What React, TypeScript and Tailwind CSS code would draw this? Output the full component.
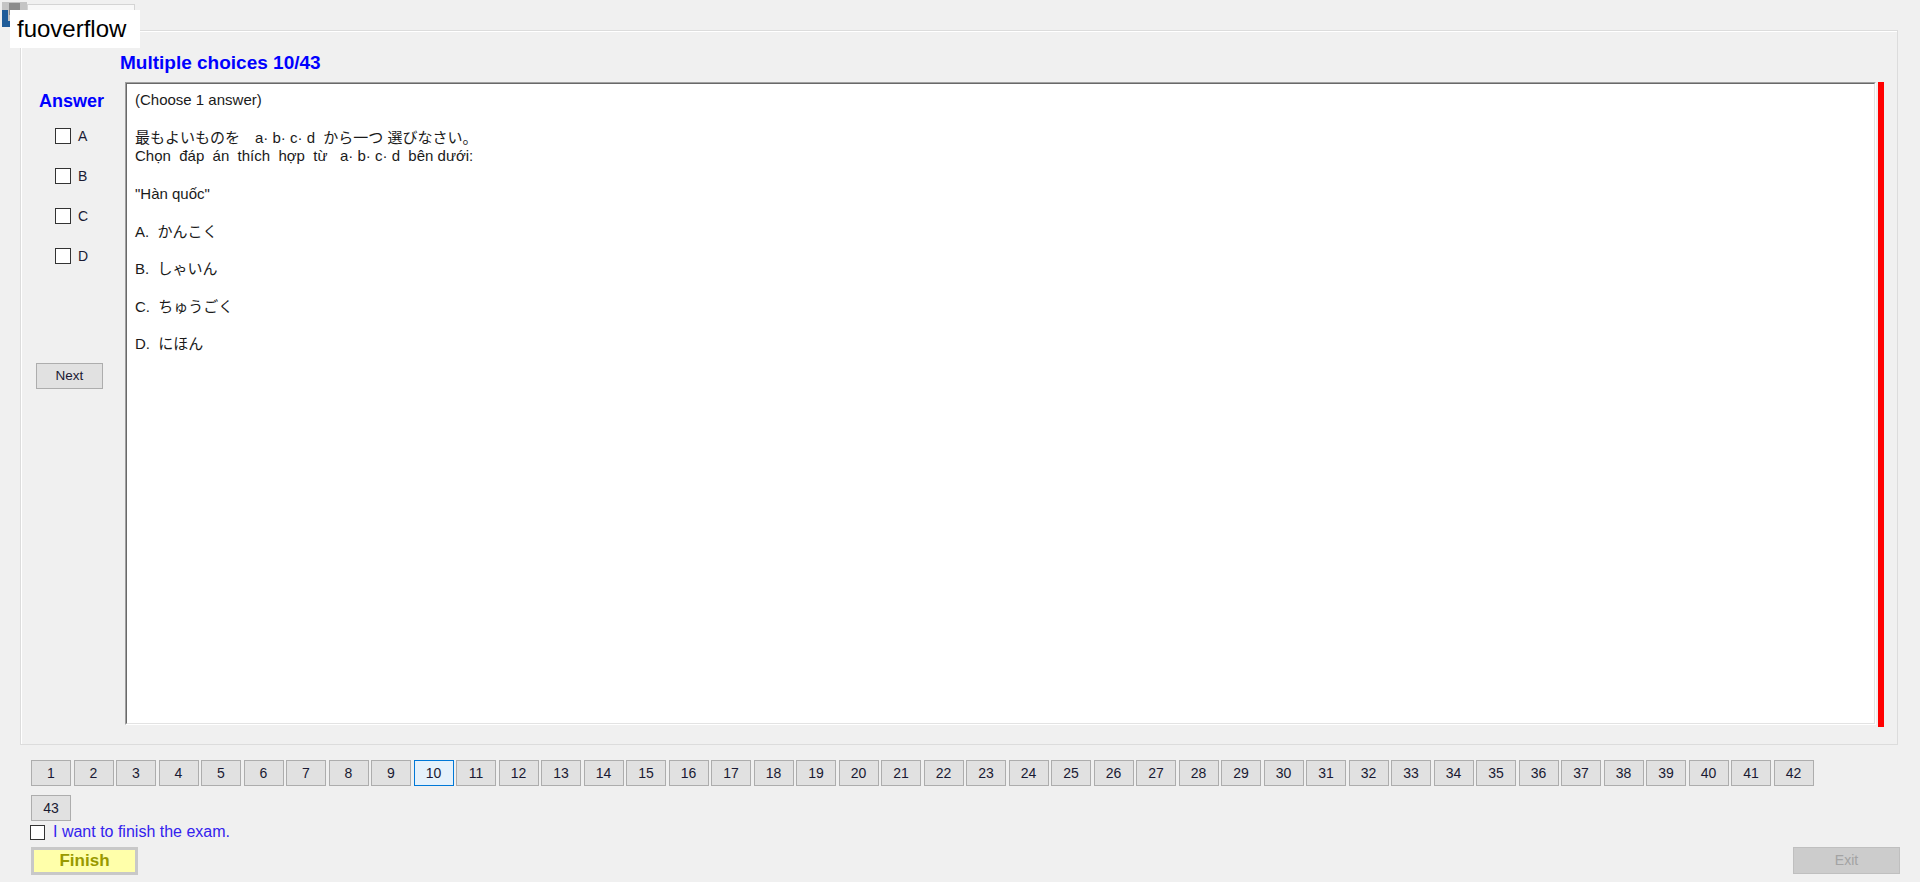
const questionLines = [
  "(Choose 1 answer)",
  "",
  "最もよいものを　a· b· c· d  から一つ 選びなさい。",
  "Chọn  đáp  án  thích  hợp  từ   a· b· c· d  bên dưới:",
  "",
  '"Hàn quốc"',
  "",
  "A.  かんこく",
  "",
  "B.  しゃいん",
  "",
  "C.  ちゅうごく",
  "",
  "D.  にほん",
]

const choices = ["A", "B", "C", "D"]
const pages = Array.from({ length: 43 }, (_, i) => i + 1)
const current = 10

function Box({ size = "w-[16px] h-[16px]" }: { size?: string }) {
  return (
    <span
      className={`${size} inline-block shrink-0 bg-white border-[1.5px] border-[#333333]`}
    />
  )
}

export default function App() {
  return (
    <div className="relative w-full h-[882px] overflow-hidden bg-[#f0f0f0] font-['Liberation_Sans','Noto_Sans_CJK_JP',sans-serif] text-[#1a1a1a]">
      {/* window icon + caption label overlay */}
      <div className="absolute left-[2px] top-[2px] w-[25px] h-[25px]">
        <svg width="25" height="25" viewBox="0 0 25 25">
          <rect x="0" y="0" width="25" height="25" fill="#c4c4c4" />
          <rect x="7" y="1" width="11" height="12" fill="#8c8c8c" />
          <rect x="0" y="8" width="6" height="17" fill="#1f5c99" />
          <rect x="0" y="19" width="25" height="6" fill="#1f5c99" />
        </svg>
      </div>
      <div className="absolute left-[27px] top-[4px] w-[108px] h-[30px] border border-[#d4d4d4] bg-[#f8f8f8]" />
      <div className="absolute left-[10px] top-[10px] w-[130px] h-[38px] bg-white pl-[7px] text-[24px] leading-[38px] text-black">
        fuoverflow
      </div>

      {/* group box */}
      <div className="ml-[20px] pt-[30px]">
        <div className="w-[1878px] h-[715px] border border-[#dcdcdc] shadow-[inset_1px_1px_0_#ffffff]">
          <div className="h-[51px] pl-[99px] pt-[21px] text-[19px] leading-[22px] font-bold text-[#0000ff]">
            Multiple choices 10/43
          </div>
          <div className="flex">
            <div className="w-[104px] shrink-0">
              <div className="pl-[18px] pt-[9px] text-[18px] leading-[20px] font-bold text-[#0000ff]">
                Answer
              </div>
              <div className="mt-[17px] pl-[34px] flex flex-col gap-[24px]">
                {choices.map((c) => (
                  <label key={c} className="flex items-center gap-[7px] h-[16px] text-[14px] leading-[16px]">
                    <Box />
                    <span className="text-[#1a1a33]">{c}</span>
                  </label>
                ))}
              </div>
              <button className="block mt-[99px] ml-[15px] w-[67px] h-[26px] bg-[#e1e1e1] border border-[#adadad] text-[13.5px] leading-[24px] text-[#1a1a33]">
                Next
              </button>
            </div>
            <div className="flex gap-[2px]">
              <div className="w-[1751px] h-[643px] border-t border-l border-[#a0a0a0] border-r-white border-b-white border-r border-b">
                <div className="h-full border-t border-l border-[#696969] border-r border-b border-r-[#e3e3e3] border-b-[#e3e3e3] bg-white pl-[8px] pt-[7px]">
                  {questionLines.map((line, i) => (
                    <div key={i} className="h-[18.8px] text-[15px] leading-[18.8px] whitespace-pre">
                      {line}
                    </div>
                  ))}
                </div>
              </div>
              <div className="w-[6px] h-[645px] bg-[#ff0000]" />
            </div>
          </div>
        </div>
      </div>

      {/* question navigator */}
      <div className="ml-[31px] mt-[15px] w-[1790px] flex flex-wrap gap-x-[2.5px] gap-y-[9px]">
        {pages.map((n) => (
          <button
            key={n}
            className={
              n === current
                ? "w-[40px] h-[26px] bg-[#e5f1fb] border border-[#0078d7] text-[14px] leading-[24px] text-[#1a1a33]"
                : "w-[40px] h-[26px] bg-[#e1e1e1] border border-[#adadad] text-[14px] leading-[24px] text-[#1a1a33]"
            }
          >
            {n}
          </button>
        ))}
      </div>

      <label className="ml-[30px] mt-[3px] flex items-center gap-[8px] h-[16px]">
        <Box size="w-[15px] h-[15px]" />
        <span className="text-[16px] leading-[16px] text-[#3322ee]">I want to finish the exam.</span>
      </label>

      <div className="mt-[7px] ml-[31px] mr-[20px] flex justify-between items-start">
        <button className="w-[107px] h-[28px] border-[3px] border-[#c8c8c8] bg-[#ffffaa] text-[17px] leading-[22px] font-bold text-[#999900]">
          Finish
        </button>
        <button className="w-[107px] h-[27px] border border-[#bfbfbf] bg-[#cccccc] text-[14px] leading-[25px] text-[#a3a3a3]">
          Exit
        </button>
      </div>
    </div>
  )
}
